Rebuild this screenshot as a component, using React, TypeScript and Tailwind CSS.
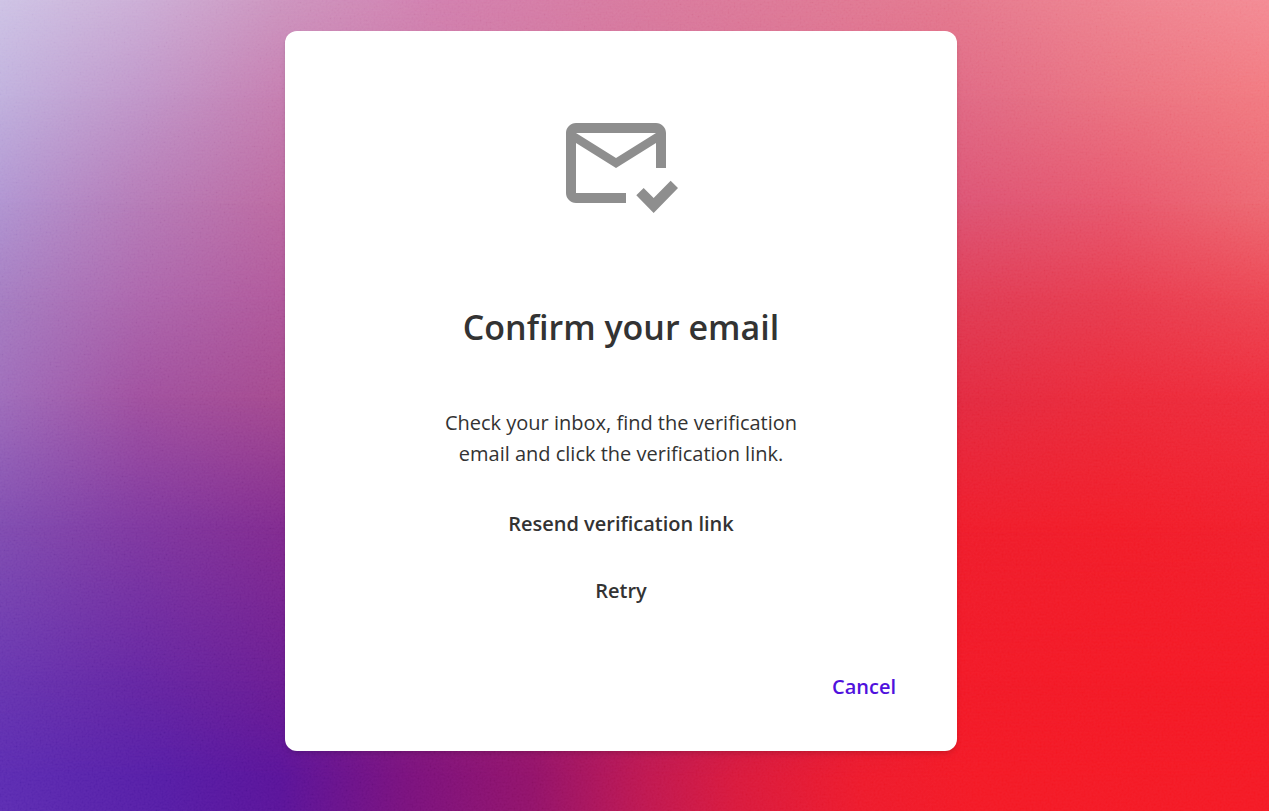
const layer = "absolute inset-0";

function Backdrop() {
  return (
    <div aria-hidden="true" className="absolute inset-0 -z-10 overflow-hidden">
      <div className={`${layer} bg-[linear-gradient(to_right,#cec3e5_0%,#ccaed6_11%,#cd95bf_22%,#d27fae_35%,#d87a9f_50%,#e4788e_75%,#ee8390_88%,#f48b94_100%)]`} />
      <div className={`${layer} bg-[linear-gradient(to_right,#c0b0dd_0%,#c096c9_11%,#c57eb0_22%,#df6985_75%,#ea7281_88%,#f27980_100%)] [mask-image:linear-gradient(to_bottom,transparent_0%,black_12%)]`} />
      <div className={`${layer} bg-[linear-gradient(to_right,#b094d1_0%,#b57bb7_11%,#bc6aa2_22%,#dc5475_75%,#e7576d_88%,#ed6972_100%)] [mask-image:linear-gradient(to_bottom,transparent_12%,black_25%)]`} />
      <div className={`${layer} bg-[linear-gradient(to_right,#a57cc1_0%,#ac66ac_11%,#b0589b_22%,#df3c55_75%,#e73c4f_88%,#ed4552_100%)] [mask-image:linear-gradient(to_bottom,transparent_25%,black_37%)]`} />
      <div className={`${layer} bg-[linear-gradient(to_right,#9e6cba_0%,#a0509f_11%,#a54a90_22%,#e22b42_75%,#eb2a3a_88%,#ef2c3c_100%)] [mask-image:linear-gradient(to_bottom,transparent_37%,black_49%)]`} />
      <div className={`${layer} bg-[linear-gradient(to_right,#804cb0_0%,#7f38a0_11%,#822b90_22%,#ef1d2c_75%,#f21d29_88%,#f11f2d_100%)] [mask-image:linear-gradient(to_bottom,transparent_49%,black_65%)]`} />
      <div className={`${layer} bg-[linear-gradient(to_right,#6735b0_0%,#6526a3_11%,#6b1d94_22%,#f21a28_75%,#f41a26_88%,#f51a26_100%)] [mask-image:linear-gradient(to_bottom,transparent_65%,black_84%)]`} />
      <div className={`${layer} bg-[linear-gradient(to_right,#5c2cb2_0%,#561da6_13%,#5a149a_22%,#7a127e_32%,#93136a_42%,#c01850_51%,#d91a3d_58%,#ee1b2c_68%,#f41a26_77%,#f51a25_100%)] [mask-image:linear-gradient(to_bottom,transparent_84%,black_96%)]`} />
      <svg className={`${layer} size-full opacity-10 mix-blend-soft-light`}>
        <filter id="grain">
          <feTurbulence type="fractalNoise" baseFrequency="0.5" numOctaves="2" />
          <feColorMatrix type="matrix" values="1.6 0 0 0 -0.3  1.6 0 0 0 -0.3  1.6 0 0 0 -0.3  0 0 0 0 1" />
        </filter>
        <rect width="100%" height="100%" filter="url(#grain)" />
      </svg>
    </div>
  );
}

function MailCheckIcon() {
  return (
    <svg aria-hidden="true" viewBox="0 0 26 24" className="mx-auto h-[120px] w-[130px] fill-[#8e8e8e]">
      <path d="M14 20H4c-1.1 0-2-.9-2-2V6c0-1.1.9-2 2-2h16c1.1 0 2 .9 2 2v7h-2V8l-8 5-8-5v10h10v2zM20 6H4l8 5 8-5z" />
      <path d="M16.06 18.47L17.53 17l2 2 3.4-3.47L24.4 17l-4.87 5z" />
    </svg>
  );
}

export default function App() {
  return (
    <div className="relative isolate flex min-h-screen items-start justify-center py-[31px] pr-[27px] font-['Open_Sans','Noto_Sans',sans-serif] text-[#333333]">
      <Backdrop />
      <main className="flex w-full max-w-2xl flex-col rounded-xl bg-white px-[61px] pt-[72px] pb-[49px] text-center text-[20px] leading-[31px] shadow-md">
        <MailCheckIcon />
        <h1 className="mt-20 text-[34px] leading-[48px] font-semibold">Confirm your email</h1>
        <p className="mx-auto mt-14 max-w-[380px]">
          Check your inbox, find the verification email and click the verification link.
        </p>
        <button type="button" className="mx-auto mt-[39px] font-semibold">Resend verification link</button>
        <button type="button" className="mx-auto mt-9 font-semibold">Retry</button>
        <button type="button" className="mt-[65px] self-end font-semibold text-[#5011dd]">Cancel</button>
      </main>
    </div>
  );
}
